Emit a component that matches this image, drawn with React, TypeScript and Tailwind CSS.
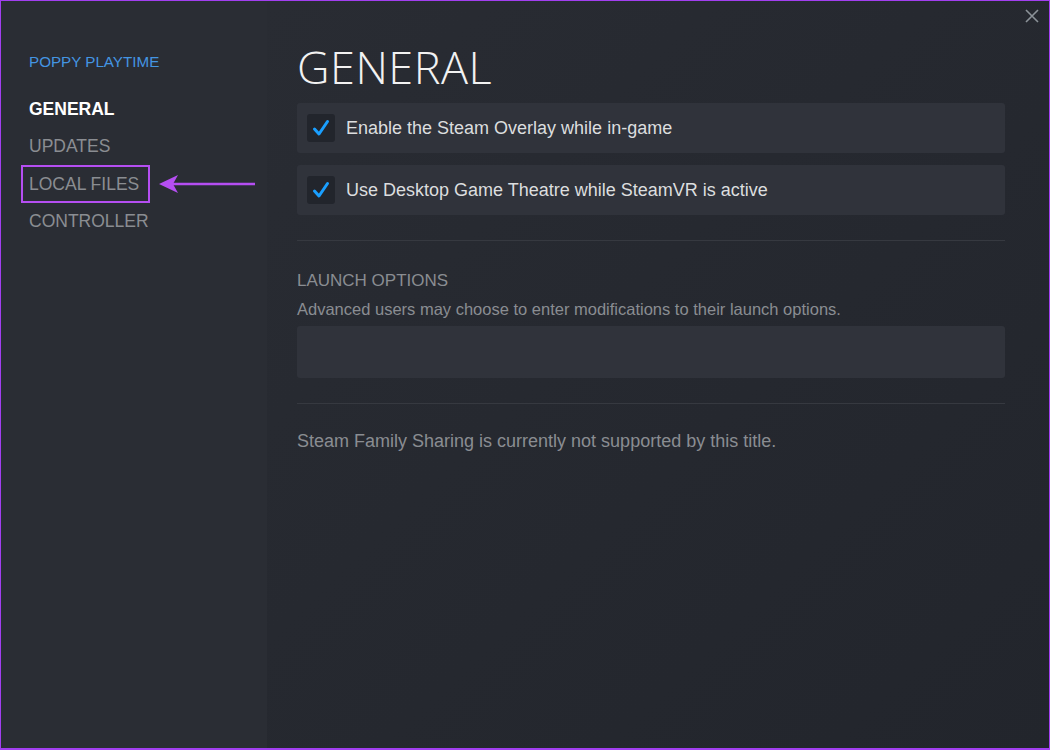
import React from 'react';

const navItems = ['UPDATES', 'LOCAL FILES', 'CONTROLLER'];

function CheckRow({ label }: { label: string }) {
  return (
    <div className="flex items-center h-[50px] px-[10px] gap-[11px] bg-[#30333b] rounded-[3px]">
      <div className="w-[28px] h-[28px] rounded-[3px] bg-[#22252c] flex items-center justify-center">
        <svg width="20" height="20" viewBox="0 0 20 20" fill="none">
          <path d="M3.5 11 L8 16 L16.5 3.5" stroke="#1a9fff" strokeWidth="3" strokeLinecap="round" strokeLinejoin="round" />
        </svg>
      </div>
      <span className="text-[18px] text-[#dcdedf]">{label}</span>
    </div>
  );
}

export default function App() {
  return (
    <div
      className="w-[1050px] h-[750px] flex border border-[#a23ff0] border-b-2 overflow-hidden bg-[#24272e]"
      style={{ fontFamily: '"Liberation Sans", Arial, sans-serif' }}
    >
      {/* Sidebar */}
      <div className="w-[266px] shrink-0 bg-[#2a2d34] pl-[28px] pt-[50px]">
        <div className="text-[15.2px] text-[#4495e2] leading-[22px]">POPPY PLAYTIME</div>
        <div className="mt-[17px] flex flex-col">
          <div className="h-[37.5px] flex items-center text-[17.5px] leading-[26px] font-bold text-white">GENERAL</div>
          {navItems.map(item => (
            <div key={item} className="h-[37.5px] flex items-center text-[17.5px] leading-[26px] text-[#8a8d92]">
              {item === 'LOCAL FILES' ? (
                <div className="relative flex items-center">
                  <span>{item}</span>
                  <div className="absolute -left-[8px] -top-[6px] w-[129px] h-[38px] border-2 border-[#b54ef2]" />
                  <svg className="absolute left-[130px] top-[2px]" width="98" height="22" viewBox="0 0 98 22">
                    <path d="M14 11 H96" stroke="#b54ef2" strokeWidth="2.5" />
                    <path d="M0 11 L19 2 L14 11 L19 20 Z" fill="#b54ef2" />
                  </svg>
                </div>
              ) : (
                item
              )}
            </div>
          ))}
        </div>
      </div>

      {/* Main */}
      <div className="relative flex-1 bg-gradient-to-br from-[#292c33] to-[#22252c] pl-[30px] pr-[44px] pt-[38px]">
        <button className="absolute right-[10px] top-[8px] text-[#8b9298]">
          <svg width="14" height="14" viewBox="0 0 14 14">
            <path d="M1 1 L13 13 M13 1 L1 13" stroke="currentColor" strokeWidth="1.6" />
          </svg>
        </button>
        <h1
          className="text-[45px] leading-[56px] text-[#f2f2f2] tracking-[0.5px]"
          style={{ fontFamily: '"Open Sans", "Liberation Sans", sans-serif', fontWeight: 300 }}
        >
          GENERAL
        </h1>
        <div className="mt-[8px] flex flex-col gap-[12px]">
          <CheckRow label="Enable the Steam Overlay while in-game" />
          <CheckRow label="Use Desktop Game Theatre while SteamVR is active" />
        </div>
        <div className="mt-[25px] h-px bg-[#363940]" />
        <div className="mt-[29px] text-[17px] text-[#8a8d92] leading-[22px]">LAUNCH OPTIONS</div>
        <div className="mt-[6px] text-[16.5px] text-[#8a8d92] leading-[22px]">
          Advanced users may choose to enter modifications to their launch options.
        </div>
        <div className="mt-[6px] h-[52px] rounded-[3px] bg-[#30333b]" />
        <div className="mt-[25px] h-px bg-[#363940]" />
        <div className="mt-[25px] text-[18px] text-[#8a8d92] leading-[24px]">
          Steam Family Sharing is currently not supported by this title.
        </div>
      </div>
    </div>
  );
}
